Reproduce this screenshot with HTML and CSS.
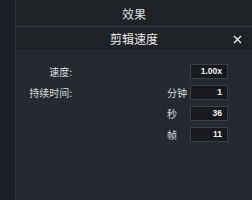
FILE: index.html
```html
<!DOCTYPE html>
<html lang="zh">
<head>
<meta charset="utf-8">
<link rel="stylesheet" href="styles.css">
</head>
<body>
<div class="app">
  <div class="side"></div>
  <div class="panel">
    <div class="head1">效果</div>
    <div class="head2">剪辑速度<svg class="close" width="9" height="9" viewBox="0 0 9 9"><path d="M1 1L8 8M8 1L1 8" stroke="#ececec" stroke-width="1.4" fill="none"/></svg></div>
    <div class="form">
      <div class="lbl">速度:</div>
      <div class="unit"></div>
      <div class="box">1.00x</div>
      <div class="lbl">持续时间:</div>
      <div class="unit">分钟</div>
      <div class="box">1</div>
      <div class="lbl"></div>
      <div class="unit">秒</div>
      <div class="box">36</div>
      <div class="lbl"></div>
      <div class="unit">帧</div>
      <div class="box">11</div>
    </div>
  </div>
</div>
</body>
</html>
```
FILE: styles.css
```css
html, body { margin: 0; padding: 0; }
body {
  width: 252px; height: 200px; overflow: hidden;
  background: #242830;
  font-family: "Noto Sans CJK SC", "Noto Sans", sans-serif;
}
.app { display: flex; height: 200px; }
.side { width: 15px; background: #1b1e23; border-right: 1px solid #2c3036; }
.panel { flex: 1; display: flex; flex-direction: column; background: #252930; }
.head1 {
  height: 26px; border-bottom: 1px solid #30343a; background: #1f2227;
  color: #dcdcdc; font-size: 12px; display: flex; align-items: center; justify-content: center;
}
.head2 {
  height: 23px; border-bottom: 1px solid #2a2e34; background: #1f2227;
  color: #e8e8e8; font-size: 12px; display: flex; align-items: center; justify-content: center;
  position: relative;
}
.close { position: absolute; left: 217px; top: 8px; }
.form {
  display: grid;
  grid-template-columns: 56px 1fr auto 38px;
  grid-auto-rows: 15px;
  row-gap: 6px;
  padding: 13px 24px 0 0;
  align-items: center;
}
.lbl { color: #d8d9db; font-size: 10px; text-align: right; line-height: 15px; grid-column: 1; }
.unit { color: #d8d9db; font-size: 10px; grid-column: 3; padding-right: 3px; line-height: 15px; }
.box {
  grid-column: 4; height: 13px; border: 1px solid #3c4046; background: #17191d;
  color: #f2f2f2; font-size: 8.5px; font-weight: 600; text-align: right; padding-right: 5px; line-height: 13px;
  font-family: "Liberation Sans", sans-serif;
}
```
